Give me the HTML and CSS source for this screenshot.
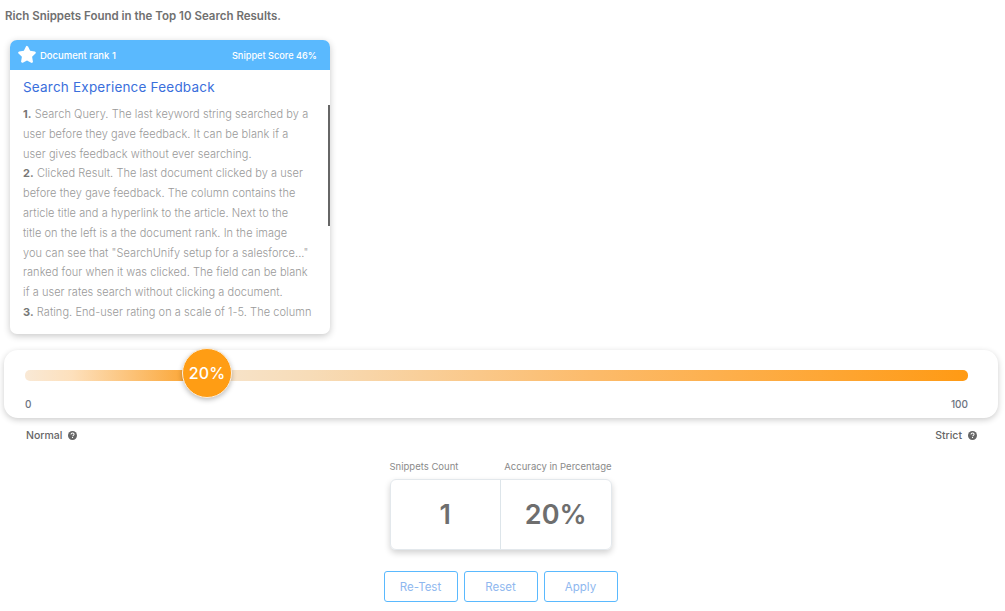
FILE: index.html
```html
<!DOCTYPE html>
<html lang="en">
<head>
<meta charset="UTF-8">
<meta name="viewport" content="width=device-width, initial-scale=1.0">
<title>Rich Snippets</title>
<link rel="stylesheet" href="styles.css">
</head>
<body>
    <h1 class="page-title">Rich Snippets Found in the Top 10 Search Results.</h1>

    <div class="snippet-card">
        <div class="snippet-head">
            <div class="rank">
                <svg class="star" width="18" height="18" viewBox="0 0 24 24"><path d="M12 1.2c.6 0 1.1.3 1.4.9l2.8 5.7 6.2.9c1.3.2 1.8 1.8.9 2.700l-4.500 4.400 1.100 6.200c.2 1.300-1.100 2.300-2.300 1.700L12 20.700l-5.600 2.900c-1.200.6-2.500-.4-2.300-1.700l1.100-6.200-4.500-4.400c-.9-.9-.4-2.500.9-2.700l6.200-.9 2.800-5.700c.3-.6.8-.9 1.400-.9z"/></svg>
                <span>Document rank 1</span>
            </div>
            <span class="score">Snippet Score 46%</span>
        </div>
        <div class="snippet-body">
            <h2 class="snippet-title">Search Experience Feedback</h2>
            <p class="snippet-text">
                <b>1.</b> Search Query. The last keyword string searched by a<br>
                user before they gave feedback. It can be blank if a<br>
                user gives feedback without ever searching.<br>
                <b>2.</b> Clicked Result. The last document clicked by a user<br>
                before they gave feedback. The column contains the<br>
                article title and a hyperlink to the article. Next to the<br>
                title on the left is a the document rank. In the image<br>
                you can see that "SearchUnify setup for a salesforce..."<br>
                ranked four when it was clicked. The field can be blank<br>
                if a user rates search without clicking a document.<br>
                <b>3.</b> Rating. End-user rating on a scale of 1-5. The column
            </p>
        </div>
        <div class="scroll-thumb"></div>
    </div>

    <div class="slider-panel">
        <div class="track">
            <div class="knob">20%</div>
        </div>
        <div class="scale">
            <span>0</span>
            <span>100</span>
        </div>
    </div>

    <div class="modes">
        <div class="mode">
            Normal
            <svg class="help" width="9" height="9" viewBox="0 0 16 16"><circle cx="8" cy="8" r="8"/><path d="M5.300 6.100C5.400 4.500 6.500 3.600 8.100 3.600c1.600 0 2.700.9 2.700 2.200 0 1-.5 1.500-1.300 2-.7.5-.9.7-.9 1.400" fill="none" stroke="#fff" stroke-width="1.800"/><rect x="7.100" y="10.600" width="1.900" height="1.900" fill="#fff"/></svg>
        </div>
        <div class="mode">
            Strict
            <svg class="help" width="9" height="9" viewBox="0 0 16 16"><circle cx="8" cy="8" r="8"/><path d="M5.300 6.100C5.400 4.500 6.500 3.600 8.100 3.600c1.600 0 2.700.9 2.700 2.200 0 1-.5 1.500-1.300 2-.7.5-.9.7-.9 1.400" fill="none" stroke="#fff" stroke-width="1.800"/><rect x="7.100" y="10.600" width="1.900" height="1.900" fill="#fff"/></svg>
        </div>
    </div>

    <div class="stats">
        <div class="stat-labels">
            <span>Snippets Count</span>
            <span>Accuracy in Percentage</span>
        </div>
        <div class="stat-box">
            <div class="stat-value">1</div>
            <div class="stat-value">20%</div>
        </div>
    </div>

    <div class="actions">
        <button>Re-Test</button>
        <button>Reset</button>
        <button>Apply</button>
    </div>
</body>
</html>
```

FILE: styles.css
```css
body {
    font-family: Inter, "Open Sans", sans-serif;
    background-color: #fff;
    color: #6e6e6e;
    margin: 0;
    padding: 0;
    height: 611px;
    overflow: hidden;
}
.page-title {
    font-size: 11.500px;
    font-weight: 600;
    line-height: 14px;
    margin: 0;
    padding: 9px 0 0 5px;
    color: #707070;
}
.snippet-card {
    position: relative;
    width: 320px;
    height: 294px;
    margin: 17px 0 0 10px;
    background-color: #fff;
    border-radius: 7px;
    box-shadow: 0 2px 7px rgba(0, 0, 0, 0.22);
    overflow: hidden;
}
.snippet-head {
    display: flex;
    align-items: center;
    justify-content: space-between;
    height: 30px;
    padding: 0 13px 0 8px;
    background-color: #5ab9fe;
    color: #fff;
    font-size: 9.500px;
    font-weight: 500;
}
.rank {
    display: flex;
    align-items: center;
    gap: 4px;
}
.score {
    font-size: 9.200px;
}
.star {
    fill: #fff;
    margin-top: -3px;
}
.snippet-body {
    padding: 0 13px;
}
.snippet-title {
    font-size: 13.500px;
    font-weight: 400;
    line-height: 18px;
    color: #3a6fdc;
    margin: 0;
    padding-top: 8px;
    letter-spacing: 0.2px;
}
.snippet-text {
    font-size: 11px;
    font-weight: 300;
    line-height: 19.800px;
    letter-spacing: 0.06px;
    color: #999;
    margin: 9px 0 0;
    white-space: nowrap;
}
.snippet-text b {
    color: #777;
    font-weight: 700;
}
.scroll-thumb {
    position: absolute;
    top: 65px;
    right: 0;
    width: 2px;
    height: 121px;
    background-color: #666;
}
.slider-panel {
    width: 994px;
    height: 68px;
    margin: 16px 0 0 4px;
    padding: 20px 30px 0 21px;
    box-sizing: border-box;
    background-color: #fff;
    border-radius: 14px;
    box-shadow: 0 2px 6px rgba(0, 0, 0, 0.2);
}
.track {
    position: relative;
    height: 11px;
    border-radius: 5px;
    background: linear-gradient(to right, #f9e9d6 0%, #fde0bc 5%, #fba534 17.500%, #f7e6d0 17.600%, #f7dcb8 30%, #fcbb6b 60%, #ff9a14 100%);
}
.knob {
    position: absolute;
    top: -22px;
    left: 157px;
    width: 48px;
    height: 48px;
    border-radius: 50%;
    border: 1px solid #fbeedd;
    background-color: #ff9d14;
    color: #fff;
    font-size: 16px;
    font-weight: 500;
    letter-spacing: 0.2px;
    line-height: 48px;
    text-align: center;
    box-shadow: 0 2px 5px rgba(0, 0, 0, 0.25);
}
.scale {
    display: flex;
    justify-content: space-between;
    font-size: 10px;
    font-weight: 500;
    line-height: 12px;
    color: #6b7280;
    margin-top: 17px;
}
.modes {
    display: flex;
    justify-content: space-between;
    padding: 12px 28px 0 26px;
    font-size: 10.500px;
    font-weight: 500;
    line-height: 12px;
    color: #666;
}
.mode {
    display: flex;
    align-items: center;
    gap: 6px;
}
.help {
    fill: #666;
    margin-top: -2px;
}
.stats {
    width: 222px;
    margin: 19px auto 0;
    position: relative;
    left: -2px;
}
.stat-labels {
    display: flex;
    justify-content: space-between;
    font-size: 9.500px;
    line-height: 12px;
    color: #8a8a8a;
}
.stat-box {
    display: flex;
    height: 69px;
    margin-top: 6px;
    border: 1px solid #e3e8ec;
    border-radius: 6px;
    box-shadow: 0 3px 6px rgba(0, 0, 0, 0.18);
}
.stat-value {
    flex: 1;
    font-size: 27px;
    font-weight: 600;
    line-height: 69px;
    text-align: center;
}
.stat-value + .stat-value {
    border-left: 1px solid #dde5ea;
}
.actions {
    display: flex;
    justify-content: center;
    gap: 6px;
    margin-top: 21px;
    position: relative;
    left: -2px;
}
button {
    width: 74px;
    height: 31px;
    padding: 0;
    font-family: inherit;
    font-size: 11.500px;
    color: #8fb8ef;
    background-color: #fff;
    border: 1px solid #5ab9fe;
    border-radius: 3px;
}
```
